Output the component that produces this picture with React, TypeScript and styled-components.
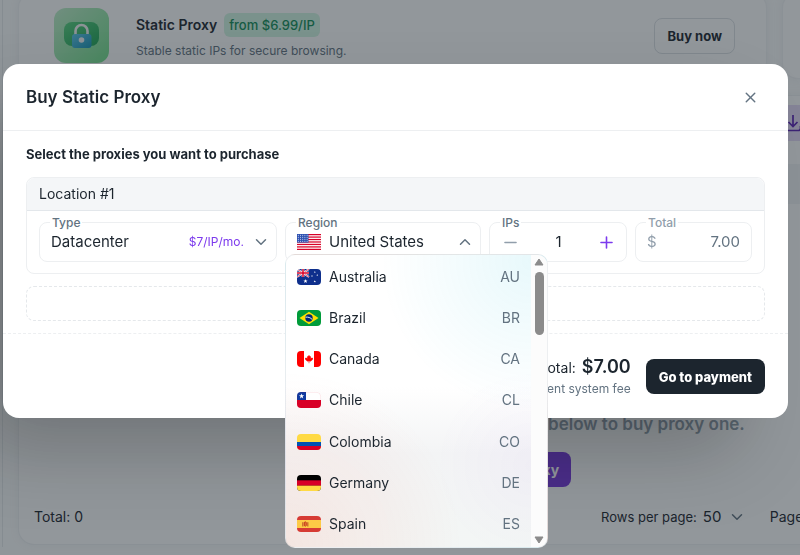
import React, { useState } from "react";
import styled, { createGlobalStyle } from "styled-components";
import { ChevronDown, ChevronUp, Minus, Plus, X } from "lucide-react";

const ink = "#1c252e";
const muted = "#637381";
const faint = "#919eab";
const line = "rgba(145, 158, 171, 0.16)";
const violet = "#7c3aed";

const GlobalStyle = createGlobalStyle`
  *, *::before, *::after { box-sizing: border-box; }
  html, body, #root { height: 100%; }
  body {
    margin: 0;
    overflow: hidden;
    background: #fcfdfd;
    color: ${ink};
    font-family: Inter, "Liberation Sans", sans-serif;
    font-size: 14px;
    line-height: 22px;
  }
  button, input, select { font: inherit; color: inherit; }
  button { cursor: pointer; }
  h1, h2, h3, p, ul { margin: 0; padding: 0; }
`;

/* ---------- page behind the dialog ---------- */

const Page = styled.main`
  width: calc(100% + 234px);
  height: 100%;
  margin-left: 2px;
  padding: 0 16px 0 15px;
  border-left: 1px solid rgba(145, 158, 171, 0.2);
`;

const Offers = styled.section`
  display: grid;
  grid-template-columns: 749px 1fr;
  gap: 15px;
  margin-top: -8px;
`;

const Card = styled.article`
  display: flex;
  align-items: center;
  gap: 27px;
  height: 87px;
  padding: 0 31px 0 35px;
  border: 1px solid rgba(145, 158, 171, 0.12);
  border-radius: 16px;
  background: #fff;
  box-shadow: 0 0 8px rgba(145, 158, 171, 0.12);
`;

const OfferText = styled.div`
  flex: 1;
  display: flex;
  flex-direction: column;
  gap: 3px;
  padding-top: 3px;
`;

const OfferHead = styled.div`
  display: flex;
  align-items: center;
  gap: 7px;
`;

const OfferTitle = styled.h3`
  font-size: 14px;
  font-weight: 600;
`;

const Price = styled.span`
  padding: 0 5px;
  border-radius: 6px;
  background: #d2f5e2;
  color: #118d57;
  font-size: 13px;
  font-weight: 500;
  line-height: 24px;
`;

const OfferNote = styled.p`
  color: ${muted};
  font-size: 12px;
`;

const OutlineButton = styled.button`
  height: 36px;
  padding: 0 12px;
  border: 1px solid rgba(145, 158, 171, 0.32);
  border-radius: 8px;
  background: transparent;
  font-size: 13px;
  font-weight: 700;
`;

const TableCard = styled.section`
  display: flex;
  flex-direction: column;
  height: 450px;
  margin-top: 16px;
  border: 1px solid rgba(145, 158, 171, 0.14);
  border-radius: 16px;
  background: #fff;
  box-shadow: 0 0 8px rgba(145, 158, 171, 0.1);
`;

const Toolbar = styled.div`
  display: flex;
  justify-content: flex-end;
  padding: 9px 208px 9px 16px;
`;

const IconTile = styled.button`
  display: grid;
  place-items: center;
  width: 36px;
  height: 36px;
  padding: 0;
  border: 0;
  border-radius: 8px;
  background: #e6dbf8;
  color: #5b21b6;
`;

const TableHead = styled.div`
  height: 40px;
  margin-top: 14px;
  background: #f4f6f8;
`;

const Empty = styled.div`
  flex: 1;
  display: flex;
  flex-direction: column;
  align-items: center;
  justify-content: flex-end;
  gap: 17px;
  padding-bottom: 3px;
`;

const EmptyText = styled.p`
  color: ${faint};
  font-size: 17px;
  font-weight: 600;
`;

const EmptyButton = styled.button`
  height: 35px;
  padding: 0 12px;
  border: 0;
  border-radius: 8px;
  background: #7635dc;
  color: #fff;
  font-weight: 700;
`;

const Pager = styled.footer`
  display: flex;
  align-items: center;
  justify-content: space-between;
  height: 54px;
  padding: 0 202px 0 15px;
`;

const PagerGroup = styled.div`
  display: flex;
  align-items: center;
  gap: 24px;
`;

const RowsLabel = styled.label`
  display: flex;
  align-items: center;
  gap: 6px;
  font-size: 13px;
`;

const BareSelect = styled.select`
  appearance: none;
  min-width: 0;
  padding: 0;
  border: 0;
  outline: 0;
  background: transparent;
  font-size: 15px;
`;

/* ---------- dialog ---------- */

const Backdrop = styled.div`
  position: fixed;
  inset: 0;
  padding: 64px 12px 0 3px;
  background: rgba(28, 37, 46, 0.48);
`;

const Dialog = styled.section`
  border-radius: 16px;
  background: #fff;
  box-shadow: -40px 40px 80px -8px rgba(0, 0, 0, 0.24);
`;

const DialogHeader = styled.header`
  display: flex;
  align-items: center;
  justify-content: space-between;
  height: 67px;
  padding: 0 29px 0 23px;
  border-bottom: 1px solid ${line};
`;

const DialogTitle = styled.h1`
  font-size: 17px;
  font-weight: 600;
`;

const CloseButton = styled.button`
  display: grid;
  place-items: center;
  padding: 0;
  border: 0;
  background: none;
  color: ${muted};
`;

const DialogBody = styled.div`
  display: flex;
  flex-direction: column;
  gap: 12px;
  padding: 12px 23px;
  border-bottom: 1px dashed ${line};
`;

const Lead = styled.h2`
  font-size: 13px;
  font-weight: 700;
`;

const Location = styled.section`
  border: 1px solid ${line};
  border-radius: 8px;
`;

const LocationTitle = styled.h3`
  padding: 5px 12px;
  border-bottom: 1px solid ${line};
  border-radius: 8px 8px 0 0;
  background: #f4f6f8;
  font-size: 14px;
  font-weight: 400;
`;

const Fields = styled.div`
  display: grid;
  grid-template-columns: 238fr 196fr 138fr 117fr;
  gap: 8px;
  padding: 11px 12px;
`;

const Field = styled.div<{ $end?: number }>`
  position: relative;
  display: flex;
  align-items: center;
  gap: 8px;
  height: 40px;
  padding: 0 ${(p) => p.$end ?? 6}px 0 11px;
  border: 1px solid ${line};
  border-radius: 8px;
  font-size: 15px;
`;

const FieldLabel = styled.label<{ $dim?: boolean }>`
  position: absolute;
  top: -9px;
  left: 10px;
  padding: 0 2px;
  background: #fff;
  color: ${(p) => (p.$dim ? faint : muted)};
  font-size: 12px;
  font-weight: 500;
  line-height: 18px;
`;

const TypeSelect = styled(BareSelect)`
  flex: 1;
`;

const Rate = styled.span`
  color: ${violet};
  font-size: 12px;
`;

const RegionButton = styled.button`
  flex: 1;
  display: flex;
  align-items: center;
  gap: 8px;
  padding: 0;
  border: 0;
  background: none;
  text-align: left;
  white-space: nowrap;
`;

const RegionName = styled.span`
  flex: 1;
`;

const StepButton = styled.button<{ $active?: boolean }>`
  display: grid;
  place-items: center;
  padding: 0;
  border: 0;
  background: none;
  color: ${(p) => (p.$active ? violet : faint)};
`;

const FieldInput = styled.input<{ $amount?: boolean }>`
  flex: 1;
  min-width: 0;
  width: 0;
  padding: 0;
  border: 0;
  outline: 0;
  background: transparent;
  color: ${(p) => (p.$amount ? muted : ink)};
  text-align: ${(p) => (p.$amount ? "right" : "center")};
`;

const Currency = styled.span`
  color: ${faint};
`;

const AddSlot = styled.div`
  height: 35px;
  border: 1px dashed rgba(145, 158, 171, 0.24);
  border-radius: 8px;
`;

const DialogFooter = styled.footer`
  display: flex;
  align-items: center;
  justify-content: flex-end;
  gap: 15px;
  padding: 21px 23px 20px;
`;

const Summary = styled.div`
  text-align: right;
`;

const SumLine = styled.p`
  display: flex;
  align-items: baseline;
  justify-content: flex-end;
  gap: 6px;
  line-height: 24px;
`;

const Sum = styled.strong`
  font-size: 18px;
  font-weight: 600;
`;

const Fee = styled.p`
  color: ${muted};
  font-size: 12px;
  line-height: 18px;
`;

const PayButton = styled.button`
  height: 35px;
  padding: 0 13px;
  border: 0;
  border-radius: 8px;
  background: ${ink};
  color: #fff;
  font-size: 13px;
  font-weight: 800;
`;

/* ---------- region menu ---------- */

const Menu = styled.div`
  position: absolute;
  z-index: 2;
  top: 31px;
  left: -1px;
  display: flex;
  width: 263px;
  height: 294px;
  overflow: hidden;
  border: 1px solid rgba(145, 158, 171, 0.16);
  border-radius: 10px;
  background:
    radial-gradient(circle at 94% 2%, rgba(0, 184, 217, 0.09), transparent 40%),
    radial-gradient(circle at 0% 100%, rgba(255, 86, 48, 0.1), transparent 45%),
    radial-gradient(circle at 94% 72%, rgba(142, 51, 255, 0.03), transparent 30%),
    linear-gradient(#fff 45%, #f3f4f5 68%, #f3f6f5);
`;

const Options = styled.ul`
  flex: 1;
  display: grid;
  grid-template-rows: repeat(7, 1fr);
  padding: 1px 11px 2px;
  list-style: none;
`;

const Option = styled.li`
  display: flex;
  align-items: center;
  gap: 8px;
  font-size: 14px;
`;

const Code = styled.span`
  margin-left: auto;
  color: ${muted};
`;

const Scrollbar = styled.div`
  display: flex;
  flex-direction: column;
  align-items: center;
  justify-content: space-between;
  width: 16px;
  padding: 3px 0;
  background: #fcfcfc;
`;

const Track = styled.div`
  flex: 1;
  padding-top: 6px;
`;

const Thumb = styled.div`
  width: 9px;
  height: 63px;
  border-radius: 5px;
  background: #8b8b8b;
`;

const FlagFrame = styled.svg<{ $square?: boolean }>`
  flex: none;
  width: 24px;
  height: 16px;
  border-radius: ${(p) => (p.$square ? "0" : "4px")};
`;

const star = (cx: number, cy: number, r: number) =>
  Array.from({ length: 10 }, (_, i) => {
    const a = -Math.PI / 2 + (i * Math.PI) / 5;
    const d = i % 2 ? r * 0.42 : r;
    return `${(cx + d * Math.cos(a)).toFixed(2)},${(cy + d * Math.sin(a)).toFixed(2)}`;
  }).join(" ");

const flags: Record<string, React.ReactNode> = {
  US: (
    <>
      <rect width="24" height="16" fill="#fff" />
      {[0, 1, 2, 3, 4, 5, 6].map((i) => (
        <rect key={i} y={i * 2.46} width="24" height="1.23" fill="#d80027" />
      ))}
      <rect width="11.5" height="8.6" fill="#2e52b2" />
      {[1.2, 3.2, 5.2, 7.2].map((y) =>
        [1.3, 3.5, 5.7, 7.9, 10.1].map((x) => (
          <circle key={`${x}-${y}`} cx={x} cy={y} r="0.5" fill="#e8ecf8" />
        )),
      )}
    </>
  ),
  AU: (
    <>
      <rect width="24" height="16" fill="#0e2f8c" />
      <path d="M0 0L12 8M12 0L0 8" stroke="#fff" strokeWidth="1.8" />
      <path d="M0 0L12 8M12 0L0 8" stroke="#d80027" strokeWidth="0.7" />
      <path d="M6 0V8M0 4H12" stroke="#fff" strokeWidth="2.6" />
      <path d="M6 0V8M0 4H12" stroke="#d80027" strokeWidth="1.5" />
      <polygon points={star(8.5, 12.2, 2.2)} fill="#fff" />
      <polygon points={star(17.8, 3.2, 1)} fill="#fff" />
      <polygon points={star(15, 7, 1)} fill="#fff" />
      <polygon points={star(20.3, 6.2, 1)} fill="#fff" />
      <polygon points={star(17.8, 12.4, 1.2)} fill="#fff" />
    </>
  ),
  BR: (
    <>
      <rect width="24" height="16" fill="#009b3a" />
      <path d="M12 1.8L21.5 8L12 14.2L2.5 8Z" fill="#fedf00" />
      <circle cx="12" cy="8" r="3.7" fill="#002776" />
      <path d="M8.6 7.2C11 6.8 13.6 7.6 15.2 9.5" stroke="#fff" strokeWidth="0.9" fill="none" />
    </>
  ),
  CA: (
    <>
      <rect width="24" height="16" fill="#fff" />
      <path d="M0 0H7V16H0ZM17 0H24V16H17Z" fill="#f00" />
      <path
        d="M12 3.8L13 5.6L14 5.2L13.7 7.5L15 6.5L16.1 7.5L15.6 8.7L13.6 10.4L12.3 10.3V12.2H11.7V10.3L10.4 10.4L8.4 8.7L7.9 7.5L9 6.5L10.3 7.5L10 5.2L11 5.6Z"
        fill="#f00"
      />
    </>
  ),
  CL: (
    <>
      <rect width="24" height="16" fill="#fff" />
      <rect y="8" width="24" height="8" fill="#d80027" />
      <rect width="9" height="8" fill="#0f3aa0" />
      <polygon points={star(4.6, 4.2, 2.7)} fill="#fff" />
      <rect x="0.3" y="0.3" width="23.4" height="15.4" rx="4" fill="none" stroke="#d80027" strokeOpacity="0.15" strokeWidth="0.6" />
    </>
  ),
  CO: (
    <>
      <rect width="24" height="16" fill="#ffda44" />
      <rect y="8" width="24" height="4" fill="#0052b4" />
      <rect y="12" width="24" height="4" fill="#d80027" />
    </>
  ),
  DE: (
    <>
      <rect width="24" height="16" fill="#000" />
      <rect y="5.33" width="24" height="5.4" fill="#d80027" />
      <rect y="10.66" width="24" height="5.4" fill="#ffda44" />
    </>
  ),
  ES: (
    <>
      <rect width="24" height="16" fill="#d63b34" />
      <rect y="4" width="24" height="8" fill="#fdca46" />
      <path d="M5.2 6.2H6.4V10.4H5.2ZM10.2 6.2H11.4V10.4H10.2Z" fill="#c45a2a" />
      <path d="M6.8 6.4L8.3 5.2L9.8 6.4V9.4L8.3 10.7L6.8 9.4Z" fill="#c8391f" />
      <path d="M8.3 6.4V9.8" stroke="#fdca46" strokeWidth="0.5" />
    </>
  ),
};

const Flag = ({ code, square }: { code: string; square?: boolean }) => (
  <FlagFrame viewBox="0 0 24 16" $square={square} aria-hidden="true">
    {flags[code]}
  </FlagFrame>
);

const LockLogo = () => (
  <svg width="55" height="55" viewBox="0 0 55 55" aria-hidden="true">
    <defs>
      <linearGradient id="tile" x1="0" y1="0" x2="1" y2="1">
        <stop offset="0" stopColor="#c0eeca" />
        <stop offset="1" stopColor="#72e08c" />
      </linearGradient>
      <linearGradient id="plate" x1="0" y1="0" x2="1" y2="1">
        <stop offset="0" stopColor="#55d07c" />
        <stop offset="1" stopColor="#1fa556" />
      </linearGradient>
      <linearGradient id="lock" x1="0" y1="0" x2="1" y2="1">
        <stop offset="0" stopColor="#5cc8e8" />
        <stop offset="1" stopColor="#1793b8" />
      </linearGradient>
    </defs>
    <rect width="55" height="55" rx="12" fill="url(#tile)" />
    <rect x="10" y="14" width="35" height="24" rx="8" fill="url(#plate)" />
    <path d="M21.5 27V23a6 6 0 0 1 12 0V27" fill="none" stroke="#f3f6f5" strokeWidth="2.6" />
    <rect x="18" y="26" width="19.5" height="14" rx="3" fill="url(#lock)" />
    <circle cx="27.5" cy="32" r="2.8" fill="#f3f6f5" />
  </svg>
);

const DownloadIcon = () => (
  <svg width="20" height="20" viewBox="0 0 20 20" fill="none" stroke="currentColor" strokeWidth="1.7" aria-hidden="true">
    <path d="M10 2V13M5.5 9L10 13.5L14.5 9M2.5 13V15.5a2 2 0 0 0 2 2H15.5a2 2 0 0 0 2 -2V13" />
  </svg>
);

const ScrollArrow = ({ up }: { up?: boolean }) => (
  <svg width="10" height="8" viewBox="0 0 10 8" aria-hidden="true">
    <path
      d={up ? "M5 1L9 7H1Z" : "M5 7L9 1H1Z"}
      fill="#8b8b8b"
      stroke="#8b8b8b"
      strokeWidth="1"
      strokeLinejoin="round"
    />
  </svg>
);

const regions = [
  ["Australia", "AU"],
  ["Brazil", "BR"],
  ["Canada", "CA"],
  ["Chile", "CL"],
  ["Colombia", "CO"],
  ["Germany", "DE"],
  ["Spain", "ES"],
];

export default function App() {
  const [region, setRegion] = useState(["United States", "US"]);
  const [open, setOpen] = useState(true);
  const [count, setCount] = useState(1);

  return (
    <>
      <GlobalStyle />
      <Page>
        <Offers>
          <Card>
            <LockLogo />
            <OfferText>
              <OfferHead>
                <OfferTitle>Static Proxy</OfferTitle>
                <Price>from $6.99/IP</Price>
              </OfferHead>
              <OfferNote>Stable static IPs for secure browsing.</OfferNote>
            </OfferText>
            <OutlineButton type="button">Buy now</OutlineButton>
          </Card>
          <Card />
        </Offers>
        <TableCard>
          <Toolbar>
            <IconTile type="button" aria-label="Download">
              <DownloadIcon />
            </IconTile>
          </Toolbar>
          <TableHead />
          <Empty>
            <EmptyText>You have no static proxy. Click below to buy proxy one.</EmptyText>
            <EmptyButton type="button">Buy a proxy</EmptyButton>
          </Empty>
          <Pager>
            <span>Total: 0</span>
            <PagerGroup>
              <RowsLabel>
                Rows per page:
                <BareSelect defaultValue="50">
                  <option>50</option>
                </BareSelect>
                <ChevronDown size={18} color={muted} />
              </RowsLabel>
              <span>Page: 1</span>
            </PagerGroup>
          </Pager>
        </TableCard>
      </Page>

      <Backdrop>
        <Dialog role="dialog" aria-modal="true" aria-labelledby="dialog-title">
          <DialogHeader>
            <DialogTitle id="dialog-title">Buy Static Proxy</DialogTitle>
            <CloseButton type="button" aria-label="Close">
              <X size={17} />
            </CloseButton>
          </DialogHeader>
          <DialogBody>
            <Lead>Select the proxies you want to purchase</Lead>
            <Location>
              <LocationTitle>Location #1</LocationTitle>
              <Fields>
                <Field>
                  <FieldLabel htmlFor="type">Type</FieldLabel>
                  <TypeSelect id="type" defaultValue="Datacenter">
                    <option>Datacenter</option>
                  </TypeSelect>
                  <Rate>$7/IP/mo.</Rate>
                  <ChevronDown size={18} color={muted} />
                </Field>
                <Field>
                  <FieldLabel htmlFor="region">Region</FieldLabel>
                  <RegionButton
                    id="region"
                    type="button"
                    aria-haspopup="listbox"
                    aria-expanded={open}
                    onClick={() => setOpen(!open)}
                  >
                    <Flag code={region[1]} square />
                    <RegionName>{region[0]}</RegionName>
                    <ChevronUp size={18} color={muted} />
                  </RegionButton>
                  {open && (
                    <Menu>
                      <Options role="listbox" aria-label="Region">
                        {regions.map(([name, code]) => (
                          <Option
                            key={code}
                            role="option"
                            aria-selected={region[1] === code}
                            onClick={() => {
                              setRegion([name, code]);
                              setOpen(false);
                            }}
                          >
                            <Flag code={code} />
                            {name}
                            <Code>{code}</Code>
                          </Option>
                        ))}
                      </Options>
                      <Scrollbar>
                        <ScrollArrow up />
                        <Track>
                          <Thumb />
                        </Track>
                        <ScrollArrow />
                      </Scrollbar>
                    </Menu>
                  )}
                </Field>
                <Field $end={10}>
                  <FieldLabel htmlFor="ips">IPs</FieldLabel>
                  <StepButton type="button" aria-label="Fewer IPs" onClick={() => setCount(Math.max(1, count - 1))}>
                    <Minus size={19} />
                  </StepButton>
                  <FieldInput
                    id="ips"
                    inputMode="numeric"
                    value={count}
                    onChange={(e) => setCount(Number(e.target.value) || 1)}
                  />
                  <StepButton $active type="button" aria-label="More IPs" onClick={() => setCount(count + 1)}>
                    <Plus size={19} />
                  </StepButton>
                </Field>
                <Field $end={11}>
                  <FieldLabel $dim htmlFor="total">
                    Total
                  </FieldLabel>
                  <Currency>$</Currency>
                  <FieldInput id="total" $amount readOnly value={(count * 7).toFixed(2)} />
                </Field>
              </Fields>
            </Location>
            <AddSlot />
          </DialogBody>
          <DialogFooter>
            <Summary>
              <SumLine>
                Subtotal: <Sum>${(count * 7).toFixed(2)}</Sum>
              </SumLine>
              <Fee>+ payment system fee</Fee>
            </Summary>
            <PayButton type="button">Go to payment</PayButton>
          </DialogFooter>
        </Dialog>
      </Backdrop>
    </>
  );
}
